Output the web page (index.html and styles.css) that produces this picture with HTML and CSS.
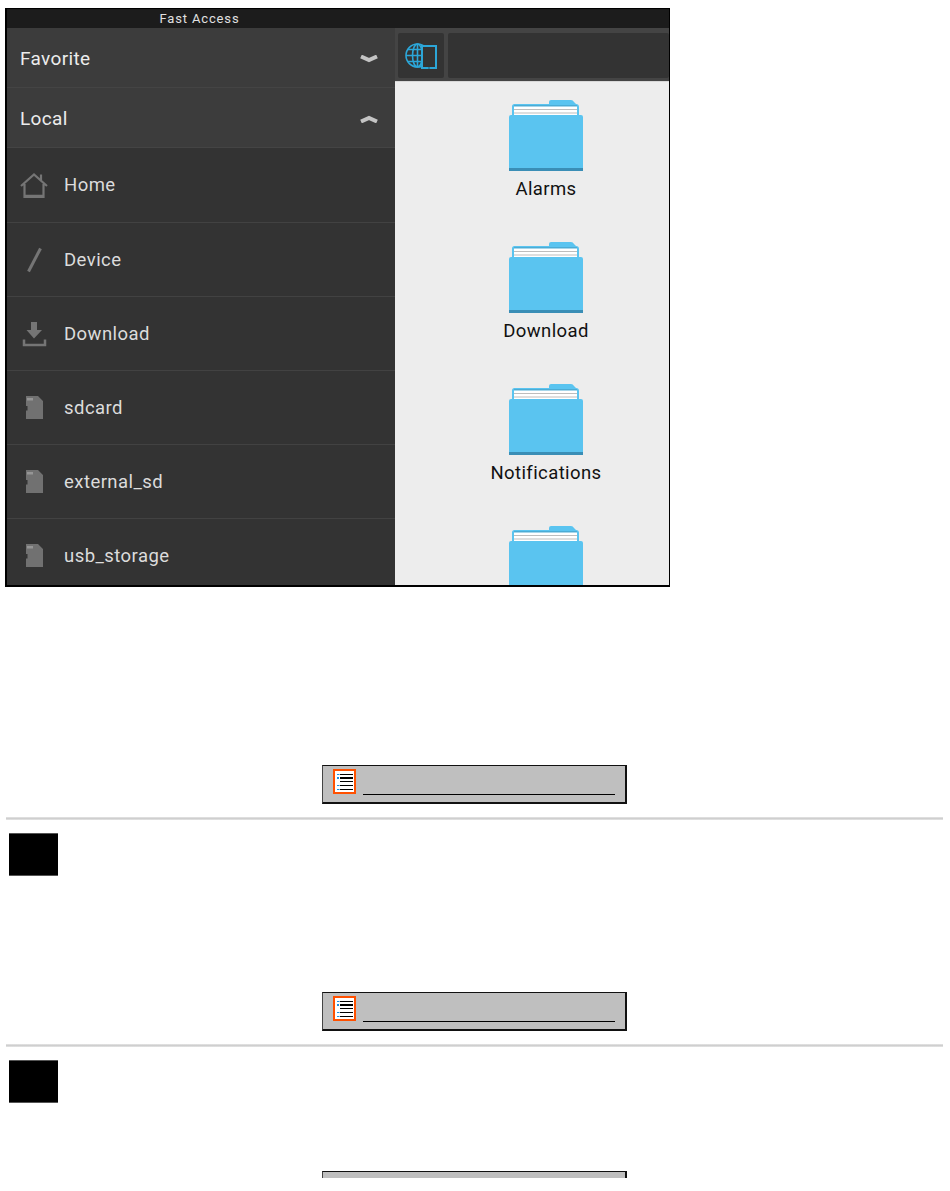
FILE: index.html
```html
<!DOCTYPE html>
<html lang="en">
<head>
<meta charset="utf-8">
<title>Fast Access</title>
<link rel="stylesheet" href="styles.css">
</head>
<body>
<svg class="defs" width="0" height="0" aria-hidden="true">
  <symbol id="sd" viewBox="0 0 28 28">
    <path d="M6 2H18L23 7V25H6V16.5H7.5V12H6Z" fill="#717171"/>
    <path d="M8 4V6.5M10 4V6.5M12 4V6.5" stroke="#bbb" stroke-width="1"/>
  </symbol>
  <symbol id="folder" viewBox="0 0 74 71">
    <path d="M3 16V6.5Q3 4 5.5 4H40V2Q40 0 42 0H62Q64 0 65 2L67 4Q70 4 70 7V16Z" fill="#5ac4f0"/>
    <rect x="5" y="5.500" width="63" height="1" fill="#3f93ba"/>
    <rect x="5" y="6.500" width="63" height="9" fill="#fff"/>
    <path d="M5 9.500H68M5 13H68" stroke="#bdbdbd" stroke-width="1"/>
    <path d="M0 17Q0 15 2 15H72Q74 15 74 17V71H0Z" fill="#5ac4f0"/>
    <rect y="68" width="74" height="3" fill="#3a8eb6"/>
  </symbol>
  <symbol id="doc" viewBox="0 0 23 25">
    <rect x="1" y="1" width="21" height="23" fill="#fff" stroke="#ff5000" stroke-width="2"/>
    <path d="M7 5.500H20M7 12.500H20M7 16.500H20M7 20.500H20" stroke="#000" stroke-width="1"/>
    <path d="M7 9H20" stroke="#000" stroke-width="2"/>
    <path d="M4 5.500H6.500M4 16.500H6.500M4 20.500H6.500" stroke="#1e90e0" stroke-width="1"/>
    <path d="M4 9H6" stroke="#1e90e0" stroke-width="2"/>
  </symbol>
</svg>

<section class="shot">
  <header class="shot-title">Fast Access</header>
  <div class="shot-body">
    <nav class="side">
      <div class="group">
        <span>Favorite</span>
        <svg class="chev" viewBox="0 0 18 8"><path d="M1 1.500L9 5L17 1.500" fill="none" stroke="#c4c4c4" stroke-width="4"/></svg>
      </div>
      <div class="group">
        <span>Local</span>
        <svg class="chev" viewBox="0 0 18 8"><path d="M1 6.500L9 3L17 6.500" fill="none" stroke="#c4c4c4" stroke-width="4"/></svg>
      </div>
      <ul class="places">
        <li class="place">
          <svg class="place-icon" viewBox="0 0 28 28"><path d="M1 15L14 3.500L27 15M21 9V3.500M4.500 13V26H23.500V13" fill="none" stroke="#757575" stroke-width="2.200"/><path d="M4.500 25H23.500" stroke="#757575" stroke-width="2.500"/></svg>
          <span>Home</span>
        </li>
        <li class="place">
          <svg class="place-icon" viewBox="0 0 28 28"><path d="M20.500 2.500L8.500 25.500" fill="none" stroke="#757575" stroke-width="3"/></svg>
          <span>Device</span>
        </li>
        <li class="place">
          <svg class="place-icon" viewBox="0 0 28 28"><path d="M11 2H17V10H22L14 18.500L6.500 10H11Z" fill="#757575"/><path d="M4 19.500V25H25V19.500" fill="none" stroke="#757575" stroke-width="2.500"/></svg>
          <span>Download</span>
        </li>
        <li class="place">
          <svg class="place-icon"><use href="#sd"/></svg>
          <span>sdcard</span>
        </li>
        <li class="place">
          <svg class="place-icon"><use href="#sd"/></svg>
          <span>external_sd</span>
        </li>
        <li class="place">
          <svg class="place-icon"><use href="#sd"/></svg>
          <span>usb_storage</span>
        </li>
      </ul>
    </nav>
    <main class="pane">
      <div class="toolbar">
        <div class="tool tool-home">
          <svg class="globe" viewBox="0 0 32 26">
            <g fill="none" stroke="#2ca6d8" stroke-width="1.600">
              <circle cx="12.500" cy="12.500" r="11.500"/>
              <ellipse cx="12.500" cy="12.500" rx="5" ry="11.500"/>
              <path d="M1 12.500H17M2.500 6.500H17M2.500 18.500H17M12.500 1V24"/>
            </g>
            <rect x="16" y="2" width="16" height="24" fill="#333"/>
            <rect x="17" y="3" width="14" height="22" fill="none" stroke="#2ca6d8" stroke-width="2"/>
            <rect x="23" y="24.500" width="2" height="1" fill="#1d5f7a"/>
          </svg>
        </div>
        <div class="tool tool-path"></div>
      </div>
      <div class="files">
        <figure class="file"><svg class="folder"><use href="#folder"/></svg><figcaption>Alarms</figcaption></figure>
        <figure class="file"><svg class="folder"><use href="#folder"/></svg><figcaption>Download</figcaption></figure>
        <figure class="file"><svg class="folder"><use href="#folder"/></svg><figcaption>Notifications</figcaption></figure>
        <figure class="file"><svg class="folder"><use href="#folder"/></svg></figure>
      </div>
    </main>
  </div>
</section>

<div class="ad ad-first"><svg class="ad-icon"><use href="#doc"/></svg><span class="ad-line"></span></div>
<hr class="rule">
<div class="square"></div>
<div class="ad ad-next"><svg class="ad-icon"><use href="#doc"/></svg><span class="ad-line"></span></div>
<hr class="rule">
<div class="square"></div>
<div class="ad ad-cut"></div>
</body>
</html>
```
FILE: styles.css
```css
* { box-sizing: border-box; }
html, body { margin: 0; padding: 0; background: #fff; }
body { height: 1191px; overflow: hidden; font-family: Roboto, "Liberation Sans", sans-serif; }
.defs { position: absolute; }

.shot {
  width: 665px;
  height: 579px;
  margin: 8px 0 0 5px;
  border: solid #000;
  border-width: 1px 1px 2px 2px;
  display: flex;
  flex-direction: column;
  overflow: hidden;
}
.shot-title {
  height: 19px;
  flex: none;
  background: #1c1c1c;
  color: #e0e0e0;
  font-size: 13px;
  line-height: 19px;
  letter-spacing: 0.85px;
  text-align: center;
  padding-right: 277px;
}
.shot-body { flex: 1; display: flex; min-height: 0; }

.side { width: 388px; flex: none; background: #333; display: flex; flex-direction: column; }
.group {
  height: 60px;
  flex: none;
  background: #3c3c3c;
  border-bottom: 1px solid #444;
  color: #ececec;
  font-size: 19px;
  letter-spacing: 0.35px;
  display: flex;
  align-items: center;
  justify-content: space-between;
  padding: 2px 17px 0 13px;
}
.chev { width: 18px; height: 8px; }
.places { list-style: none; margin: 1px 0 0; padding: 0; }
.place {
  height: 74px;
  border-bottom: 1px solid #424242;
  color: #dcdcdc;
  font-size: 18.5px;
  letter-spacing: 0.45px;
  display: flex;
  align-items: center;
  gap: 16px;
  padding-left: 13px;
}
.place:first-child { padding-bottom: 1px; }
.place-icon { width: 28px; height: 28px; flex: none; }

.pane { flex: 1; min-width: 0; background: #ededed; display: flex; flex-direction: column; }
.toolbar {
  height: 54px;
  flex: none;
  background: #444;
  border-bottom: 1px solid #d8d8d8;
  display: flex;
  gap: 4px;
  padding: 5px 0 3px 3px;
}
.tool { background: #333; border-radius: 2px; display: flex; align-items: center; justify-content: center; }
.tool-home { width: 46px; flex: none; }
.tool-path { flex: 1; }
.globe { width: 32px; height: 26px; }

.files { flex: 1; min-height: 0; overflow: hidden; padding: 18px 0 0 28px; }
.file {
  height: 142px;
  margin: 0;
  display: flex;
  flex-direction: column;
  align-items: center;
  color: #111;
  font-size: 18.5px;
  line-height: 22px;
  letter-spacing: 0.4px;
  text-align: center;
}
.folder { width: 74px; height: 71px; flex: none; }
figcaption { margin-top: 7px; }

.ad {
  width: 305px;
  margin-left: 322px;
  background: #bfbfbf;
  border: solid #111;
  border-width: 1px 2px 2px 1px;
  border-left-color: #444;
  overflow: hidden;
}
.ad-first { height: 39px; margin-top: 178px; display: flex; align-items: flex-end; padding: 3px 10px 7px 10px; gap: 7px; }
.ad-next { height: 39px; margin-top: 116px; display: flex; align-items: flex-end; padding: 3px 10px 7px 10px; gap: 7px; }
.ad-cut { height: 7px; margin-top: 68px; border-bottom: 0; }
.ad-icon { width: 23px; height: 25px; flex: none; margin-bottom: 1px; }
.ad-line { flex: 1; height: 1px; background: #000; }

.rule {
  width: 937px;
  height: 3px;
  margin: 13px 0 0 6px;
  border: 0;
  background: linear-gradient(#e6e6e6, #cfcfcf 50%, #e6e6e6);
}
.square {
  width: 49px;
  height: 43px;
  margin: 13px 0 0 9px;
  background: #000;
  border: solid #555;
  border-width: 1px 0;
}
```
